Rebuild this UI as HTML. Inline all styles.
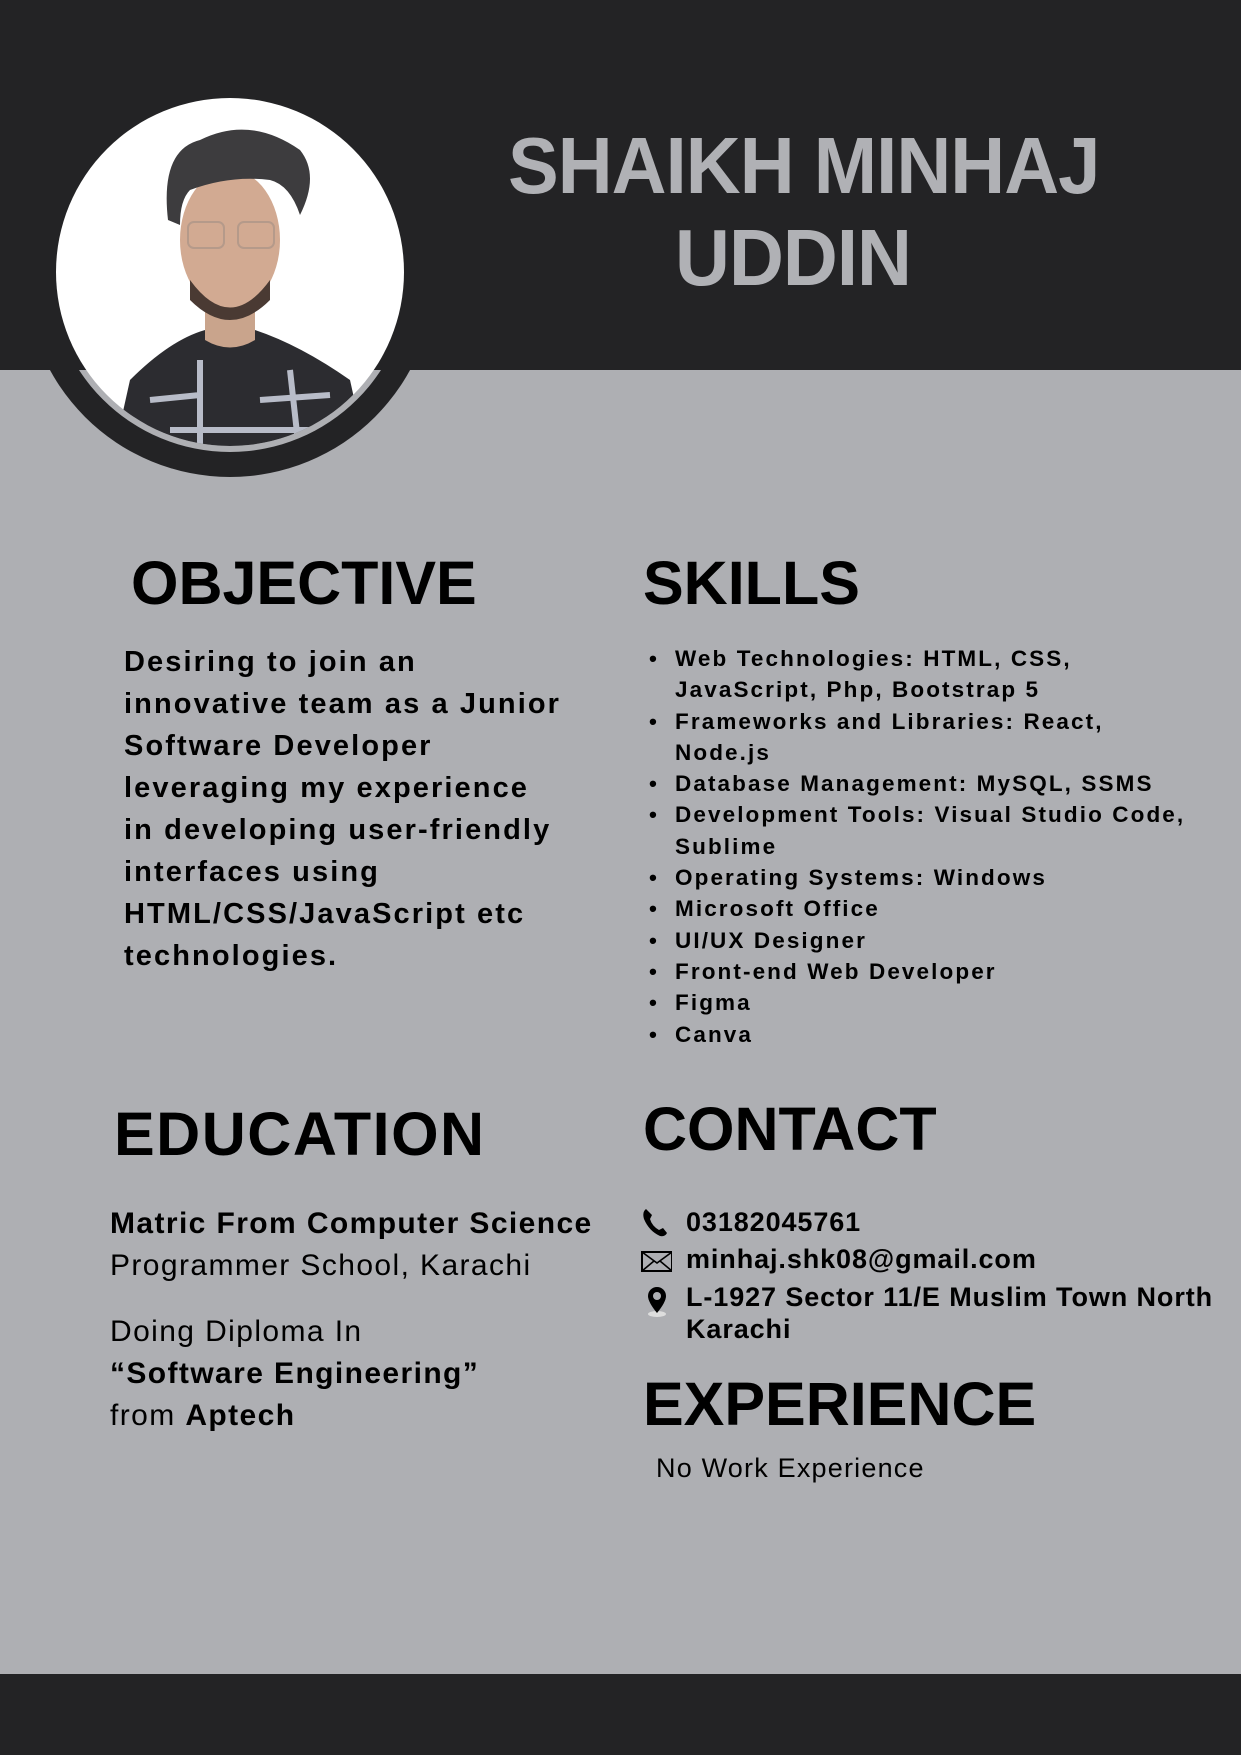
<!DOCTYPE html>
<html><head><meta charset="utf-8"><style>
*{margin:0;padding:0;box-sizing:border-box}
body{width:1241px;height:1755px;position:relative;background:#aeafb3;font-family:"Liberation Sans",sans-serif;color:#000;overflow:hidden}
.a{position:absolute;white-space:nowrap}
.h{font-size:61px;font-weight:bold;line-height:61px}
.o{font-size:29px;font-weight:bold;line-height:42px;letter-spacing:2.1px}
.s{font-size:22.5px;font-weight:bold;line-height:31.3px;letter-spacing:2.1px;list-style:none}
.s li{position:relative;padding-left:0}
.s li:before{content:"•";position:absolute;left:-26px}
.e{font-size:30px;line-height:42px;letter-spacing:1.4px}
.c{font-size:27px;font-weight:bold;line-height:34px;letter-spacing:0.9px}
</style></head><body>
<div class="a" style="left:0;top:0;width:1241px;height:370px;background:#232325"></div>
<div class="a" style="left:0;top:1674px;width:1241px;height:81px;background:#232325"></div>
<svg class="a" style="left:0;top:0" width="470" height="490" viewBox="0 0 470 490">
<defs><clipPath id="b"><rect x="0" y="370" width="470" height="120"/></clipPath>
<clipPath id="w"><circle cx="230" cy="272" r="174"/></clipPath></defs>
<circle cx="230" cy="272" r="205" fill="#232325" clip-path="url(#b)"/>
<circle cx="230" cy="272" r="180" fill="#aeafb3" clip-path="url(#b)"/>
<circle cx="230" cy="272" r="174" fill="#fff"/>
<g clip-path="url(#w)">
<path d="M110 470 L130 380 Q170 340 205 330 L255 330 Q300 345 350 380 L370 470 Z" fill="#2c2c30"/>
<path d="M150 400 L200 395 M260 400 L330 395 M170 430 L330 430 M200 360 L200 460 M290 370 L300 460" stroke="#b8bcc8" stroke-width="6" fill="none"/>
<path d="M205 300 L205 340 Q230 355 255 340 L255 300 Z" fill="#c9a48c"/>
<ellipse cx="230" cy="240" rx="50" ry="70" fill="#d2aa92"/>
<path d="M190 280 Q230 335 270 280 L270 300 Q230 340 190 300 Z" fill="#4a3a33"/>
<path d="M168 220 Q160 150 200 140 Q250 115 300 150 Q320 175 300 215 Q290 185 270 180 Q230 175 190 190 Q180 200 180 225 Z" fill="#3d3c3e"/>
<rect x="188" y="222" width="36" height="26" rx="6" fill="none" stroke="#b59a8a" stroke-width="2"/>
<rect x="238" y="222" width="36" height="26" rx="6" fill="none" stroke="#b59a8a" stroke-width="2"/>
</g>
</svg>
<div class="a" style="left:493px;width:600px;top:120px;text-align:center;font-size:80px;font-weight:bold;line-height:92px;color:#b0b1b5;letter-spacing:-1px;transform:scaleX(0.95)">SHAIKH MINHAJ<br>UDDIN</div>

<div class="a h" style="left:131px;top:553px">OBJECTIVE</div>
<div class="a o" style="left:124px;top:641px">Desiring to join an<br>innovative team as a Junior<br>Software Developer<br>leveraging my experience<br>in developing user-friendly<br>interfaces using<br>HTML/CSS/JavaScript etc<br>technologies.</div>

<div class="a h" style="left:643px;top:553px">SKILLS</div>
<ul class="a s" style="left:675px;top:643px">
<li>Web Technologies: HTML, CSS,<br>JavaScript, Php, Bootstrap 5</li>
<li>Frameworks and Libraries: React,<br>Node.js</li>
<li>Database Management: MySQL, SSMS</li>
<li>Development Tools: Visual Studio Code,<br>Sublime</li>
<li>Operating Systems: Windows</li>
<li>Microsoft Office</li>
<li>UI/UX Designer</li>
<li>Front-end Web Developer</li>
<li>Figma</li>
<li>Canva</li>
</ul>

<div class="a h" style="left:114px;top:1104px;letter-spacing:1.5px">EDUCATION</div>
<div class="a e" style="left:110px;top:1203px;font-weight:bold">Matric From Computer Science</div>
<div class="a e" style="left:110px;top:1245px">Programmer School, Karachi</div>
<div class="a e" style="left:110px;top:1311px">Doing Diploma In</div>
<div class="a e" style="left:110px;top:1353px;font-weight:bold">“Software Engineering”</div>
<div class="a e" style="left:110px;top:1395px">from <b>Aptech</b></div>

<div class="a h" style="left:643px;top:1099px">CONTACT</div>
<svg class="a" style="left:640px;top:1206px" width="32" height="120" viewBox="0 0 32 120">
<path d="M6 3 Q2 6 4 13 Q9 25 20 30 Q25 31 27 27 L23 22 L19 24 Q12 20 10 13 L12 9 Z" fill="#000"/>
<rect x="2" y="46" width="30" height="19" fill="none" stroke="#000" stroke-width="2"/>
<path d="M2 46 L17 57 L32 46 M2 65 L14 55 M32 65 L20 55" stroke="#000" stroke-width="1.6" fill="none"/>
<ellipse cx="17" cy="108" rx="9" ry="3" fill="#ddd"/>
<path d="M17 81 A9 9 0 0 1 26 90 Q26 96 17 107 Q8 96 8 90 A9 9 0 0 1 17 81 Z" fill="#000"/>
<circle cx="17" cy="90" r="4" fill="#aeafb3"/>
</svg>
<div class="a c" style="left:686px;top:1205px">03182045761</div>
<div class="a c" style="left:686px;top:1242px">minhaj.shk08@gmail.com</div>
<div class="a c" style="left:686px;top:1280px">L-1927 Sector 11/E Muslim Town North</div>
<div class="a c" style="left:686px;top:1312px">Karachi</div>

<div class="a h" style="left:643px;top:1374px">EXPERIENCE</div>
<div class="a" style="left:656px;top:1452px;font-size:27px;line-height:32px;letter-spacing:1.2px">No Work Experience</div>
</body></html>
